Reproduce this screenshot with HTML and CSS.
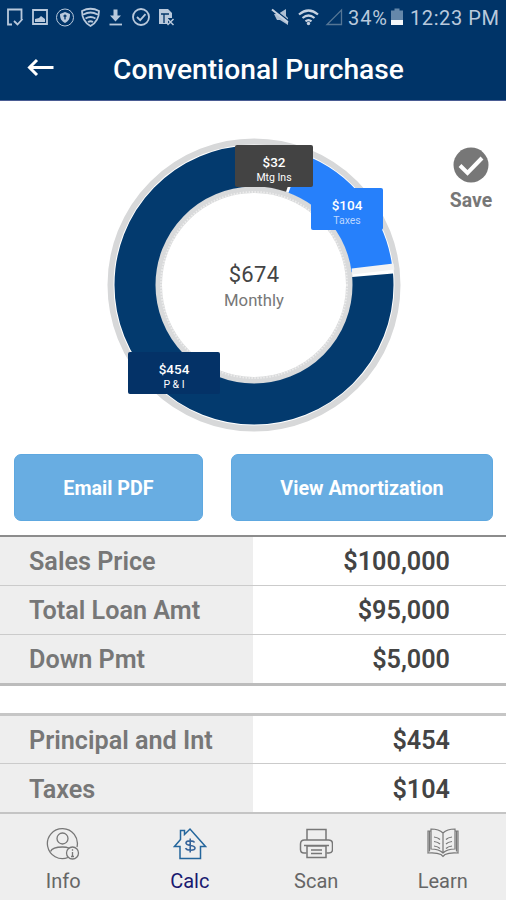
FILE: index.html
```html
<!DOCTYPE html>
<html lang="en">

<head>
    <meta charset="utf-8">
    <title>Conventional Purchase</title>
    <link rel="stylesheet" href="styles.css">
</head>

<body>
    <header class="header">
        <div class="status-bar">
            <svg class="status-left" width="180" height="34" viewBox="0 0 180 34" fill="none" stroke="#b9c9dc" stroke-width="1.8">
                <path d="M12 24.500H8V9.500h13.500v10M14 21l3.500 3.500 5-5.500" />
                <path d="M33 10h14v14H33z" />
                <path d="M35 22v-3l4-1 2-2 4 3v3z" fill="#b9c9dc" stroke="none" />
                <circle cx="65" cy="17.500" r="8.500" stroke-width="1" />
                <path d="M65 12l5 2c0 5-1.500 7-5 9-3.500-2-5-4-5-9z" fill="#b9c9dc" stroke="none" />
                <path d="M65 14.500v5M63.500 16h3" stroke="#003468" stroke-width="1.300" />
                <path d="M82 11q8.500-4.500 17 0c0 7-3 12-8.500 15C85 23 82 18 82 11zM83.500 14.500q7-4 14 0M85.500 18.500q5-3 10 0M88 22q2.500-1.500 5 0" />
                <path d="M113.500 9.500h4v6h3.500l-5.500 6-5.500-6h3.500z" fill="#b9c9dc" stroke="none" />
                <path d="M109.500 24.500h12.500" />
                <circle cx="141" cy="17" r="8" />
                <path d="M137 17l3.200 3.200 5.300-6" />
                <path d="M159 9h9l4 4v5h-4v6h-9z" fill="#b9c9dc" stroke="none" />
                <path d="M161 14h8M164 14v9" stroke="#003468" stroke-width="1.300" />
                <path d="M167.500 19l6 6M173.500 19l-6 6" stroke-width="1.500" />
            </svg>
            <svg class="status-signal" width="76" height="34" viewBox="0 0 76 34" fill="none" stroke="#c6d2e1" stroke-width="2.200">
                <path d="M3 14h4l8-5v7l2 2v7l-8-5H6z" fill="#aebfd3" stroke="none" />
                <path d="M2 8.500l16 12.500" stroke="#003468" stroke-width="1.300" />
                <path d="M1 9.500l16 13" stroke-width="2" />
                <path d="M28 14.500q9.500-8 19 0M31.500 18q6-5 12 0M34.500 21.300q3-2.500 6 0" />
                <circle cx="37.500" cy="23.500" r="1.700" fill="#c6d2e1" stroke="none" />
                <path d="M56 24.500h14.500V10z" stroke="#557695" stroke-width="1.300" />
            </svg>
            <span class="battery-text">34%</span>
            <svg class="battery" width="12" height="34" viewBox="0 0 12 34">
                <path d="M3.500 8.500h5v2H12v14.500H0V10.500h3.500z" fill="#6588aa" />
                <path d="M0 20h12v5H0z" fill="#f4f7fa" />
            </svg>
            <span class="clock">12:23 PM</span>
        </div>
        <div class="title-bar">
            <svg class="back" width="28" height="20" viewBox="0 0 28 20" fill="none" stroke="#fff" stroke-width="3">
                <path d="M26.500 9.500H3M10 2L2.500 9.500 10 17" />
            </svg>
            <h1>Conventional Purchase</h1>
        </div>
    </header>

    <main>
        <section class="summary">
            <div class="chart">
                <svg width="294" height="294" viewBox="-147 -147 294 294" fill="none">
                    <circle r="143.500" stroke="#d7d8d9" stroke-width="6" />
                    <circle r="95.500" stroke="#d9dadb" stroke-width="7" />
                    <circle r="93" stroke="#ececec" stroke-width="2" stroke-dasharray="1.500 1.500" />
                    <!-- ring slices: P & I, mortgage insurance, taxes -->
                    <circle class="slice" r="119" pathLength="360" stroke="#033a6e" stroke-dasharray="273 87" stroke-dashoffset="-85.300" />
                    <circle class="slice" r="119" pathLength="360" stroke="#434343" stroke-dasharray="17 343" stroke-dashoffset="-2" />
                    <circle class="slice" r="119" pathLength="360" stroke="#2680fb" stroke-dasharray="62 298" stroke-dashoffset="-20.500" />
                    <path d="M98-13.500l42-5" stroke="#f3f3f3" stroke-width="6" />
                </svg>
                <div class="total">
                    <div class="total-amount">$674</div>
                    <div class="total-label">Monthly</div>
                </div>
                <div class="tip tip-ins"><b>$32</b><span>Mtg Ins</span></div>
                <div class="tip tip-taxes"><b>$104</b><span>Taxes</span></div>
                <div class="tip tip-pi"><b>$454</b><span>P &amp; I</span></div>
            </div>
            <div class="save">
                <svg width="36" height="36" viewBox="0 0 36 36" fill="none">
                    <circle cx="18" cy="18" r="17.500" fill="#777" />
                    <path d="M7 18.500l7.500 7.500L29 11" stroke="#fff" stroke-width="4" />
                </svg>
                <span>Save</span>
            </div>
        </section>

        <div class="buttons">
            <button class="btn-email">Email PDF</button>
            <button class="btn-amort">View Amortization</button>
        </div>

        <div class="rows loan-rows">
            <div class="row"><span class="name">Sales Price</span><span class="value">$100,000</span></div>
            <div class="row"><span class="name">Total Loan Amt</span><span class="value">$95,000</span></div>
            <div class="row"><span class="name">Down Pmt</span><span class="value">$5,000</span></div>
        </div>

        <div class="rows payment-rows">
            <div class="row"><span class="name">Principal and Int</span><span class="value">$454</span></div>
            <div class="row"><span class="name">Taxes</span><span class="value">$104</span></div>
        </div>
    </main>

    <nav class="tabs">
        <a class="tab">
            <svg width="34" height="34" viewBox="0 0 34 34" fill="none" stroke="#777" stroke-width="1.300">
                <path d="M22 31.500A15 15 0 1 1 31 21" />
                <circle cx="16.500" cy="12.500" r="5.500" />
                <path d="M4.500 25.500c1.500-3.500 6-4.500 12-4.500 3 0 5 .4 6.500 1" />
                <circle cx="26.500" cy="27" r="6" />
                <path d="M26.500 26v4.500M26.500 23.300v1.400M25 30.500h3" />
            </svg>
            <span>Info</span>
        </a>
        <a class="tab active">
            <svg width="34" height="34" viewBox="0 0 34 34" fill="none" stroke="#24669c" stroke-width="1.500">
                <path d="M7 32.500V20.500H1.500L7.500 13.500V4.500h4V8.500L17 3l15.500 17.500H27.500v12z" />
                <path d="M21.500 16.500c-1-2-8.500-2.500-8.500.5 0 3.500 9 1.500 9 5 0 3-8 3-9.500.2M17.200 12.500v14" stroke="#38659b" stroke-width="1.600" />
            </svg>
            <span>Calc</span>
        </a>
        <a class="tab">
            <svg width="34" height="34" viewBox="0 0 34 34" fill="none" stroke="#777" stroke-width="1.500">
                <path d="M8 14V3.500h19V14M7.500 27H5q-3.500 0-3.500-3.500V18q0-4 4-4h24q4 0 4 4v5.500Q33.500 27 30 27h-2.500" />
                <path d="M8 20h19v11.500h-19zM5 19.500h25M12 24h11M12 27.500h11" />
            </svg>
            <span>Scan</span>
        </a>
        <a class="tab">
            <svg width="34" height="34" viewBox="0 0 34 34" fill="none" stroke="#777" stroke-width="1.200">
                <path d="M17 7C14 4 9 3 5 3v20c5 0 9 1 12 4 3-3 7-4 12-4V3c-4 0-9 1-12 4zM17 7v20" />
                <path d="M5 5H2v22c6-.5 10 0 13 1.500l2 2 2-2c3-1.500 7-2 13-1.500V5h-3M3.500 5.500v20M30.500 5.500v20" />
                <path d="M8 11q4 .5 6 2.500M8 15.500q4 .5 6 2.500M8 20q4 .5 6 2.500M26 11q-4 .5-6 2.500M26 15.500q-4 .5-6 2.500M26 20q-4 .5-6 2.500" />
            </svg>
            <span>Learn</span>
        </a>
    </nav>
</body>

</html>
```
FILE: styles.css
```css
* {
    box-sizing: border-box;
}

body {
    width: 506px;
    height: 900px;
    margin: 0;
    display: flex;
    flex-direction: column;
    overflow: hidden;
    background: #fff;
    font-family: Roboto, "Liberation Sans", sans-serif;
}

svg {
    display: block;
    flex: none;
}

.header {
    height: 101px;
    background: #003468;
    border-bottom: 1px solid #4a5c93;
    color: #fff;
}

.status-bar {
    display: flex;
    height: 36px;
    align-items: center;
    color: #b9c9dc;
    font-size: 20px;
    line-height: 36px;
}

.status-bar svg {
    align-self: flex-start;
}

.status-signal {
    margin-left: 91px;
}

.battery-text {
    width: 44px;
    padding-left: 1px;
    letter-spacing: 0.9px;
}

.clock {
    margin-left: 7px;
    letter-spacing: 0.6px;
    white-space: nowrap;
}

.title-bar {
    display: flex;
    height: 64px;
    align-items: center;
    padding-left: 27px;
}

.title-bar h1 {
    margin: 3px 0 0 58px;
    font-size: 28.2px;
    font-weight: 500;
    line-height: 40px;
    white-space: nowrap;
}

.summary {
    display: flex;
    height: 353px;
    padding: 37px 0 0 107px;
}

.chart {
    position: relative;
    width: 294px;
    height: 294px;
}

.slice {
    stroke-width: 41px;
    transform: rotate(-90deg);
}

.total {
    position: absolute;
    top: 122px;
    left: 0;
    width: 294px;
    text-align: center;
}

.total-amount {
    color: #444;
    font-size: 22px;
    line-height: 29px;
    letter-spacing: 0.3px;
}

.total-label {
    color: #777;
    font-size: 16.7px;
    line-height: 24px;
}

.tip {
    position: absolute;
    display: flex;
    flex-direction: column;
    align-items: center;
    padding-top: 9px;
    border-radius: 2px;
    color: #fff;
    font-size: 10.5px;
    line-height: 15px;
}

.tip b {
    font-size: 13.5px;
    font-weight: 500;
    line-height: 16px;
}

.tip-ins {
    top: 7px;
    left: 128px;
    width: 78px;
    height: 42px;
    background: #434343;
}

.tip-taxes {
    top: 50px;
    left: 204px;
    width: 72px;
    height: 42px;
    background: #2680fb;
}

.tip-taxes span {
    color: #bcd6ff;
}

.tip-pi {
    top: 214px;
    left: 21px;
    width: 92px;
    height: 42px;
    background: #043267;
}

.save {
    display: flex;
    flex-direction: column;
    align-items: center;
    width: 60px;
    margin: 9px 0 0 40px;
    color: #777;
    font-size: 19.4px;
    font-weight: 700;
    line-height: 24px;
}

.save span {
    margin-top: 6px;
}

.buttons {
    display: flex;
    gap: 28px;
    padding: 0 13px 14px 14px;
}

.buttons button {
    height: 67px;
    padding: 1px 0 0;
    border: 1px solid #5ea8e0;
    border-radius: 7px;
    background: #68ade2;
    color: #fff;
    font-family: inherit;
    font-size: 19.7px;
    font-weight: 700;
}

.btn-email {
    width: 189px;
}

.btn-amort {
    width: 262px;
}

.rows {
    border-top: 2px solid #8c8c8c;
}

.row {
    display: flex;
    height: 49px;
    border-bottom: 1px solid #cbcbcb;
    font-size: 25.2px;
    font-weight: 600;
    line-height: 50px;
}

.name {
    width: 253px;
    padding-left: 29px;
    background: #eee;
    color: #777;
}

.value {
    flex: 1;
    padding-right: 56px;
    color: #444;
    text-align: right;
}

.loan-rows .row:last-child {
    height: 51px;
    border-bottom: 3px solid #bcbcbc;
}

.payment-rows {
    margin-top: 27px;
    border-top: 3px solid #c6c6c6;
}

.payment-rows .row {
    height: 48px;
}

.payment-rows .row:last-child {
    height: 50px;
    border-bottom: 2px solid #c4c4c4;
}

.payment-rows .row:last-child {
    line-height: 51px;
}

.tabs {
    display: flex;
    flex: 1;
    background: #eee;
}

.tab {
    display: flex;
    flex: 1;
    flex-direction: column;
    align-items: center;
    padding-top: 12px;
    color: #666;
    font-size: 20px;
    line-height: 24px;
}

.tab span {
    margin-top: 9px;
}

.active {
    color: #191970;
}
```
